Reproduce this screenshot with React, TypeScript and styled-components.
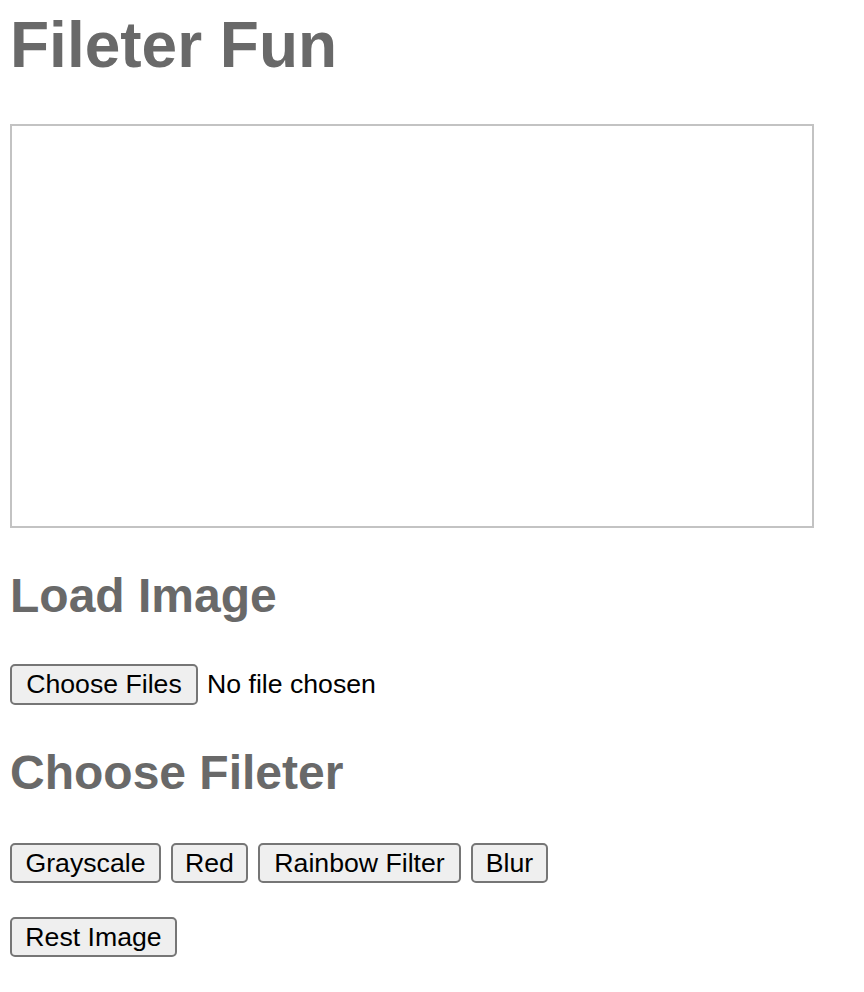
import React, { useRef, useState } from "react";
import styled, { createGlobalStyle } from "styled-components";

const GlobalStyle = createGlobalStyle`
  html, body {
    margin: 0;
    padding: 0;
    background: #ffffff;
  }
  body {
    font-family: "Liberation Sans", Arial, Helvetica, sans-serif;
  }
`;

const Page = styled.main`
  display: flex;
  flex-direction: column;
  align-items: flex-start;
  padding: 0 10px;
`;

const Title = styled.h1`
  margin: 8px 0 42px;
  font-size: 64px;
  line-height: 74px;
  font-weight: 700;
  color: #696969;
`;

const Heading = styled.h2<{ $top: number; $bottom: number }>`
  margin: ${(p) => p.$top}px 0 ${(p) => p.$bottom}px;
  font-size: 48px;
  line-height: 55px;
  font-weight: 700;
  color: #696969;
`;

const Canvas = styled.canvas`
  display: block;
  width: 800px;
  height: 400px;
  border: 2px solid #c3c3c3;
  background: #ffffff;
`;

const Row = styled.div<{ $bottom?: number }>`
  display: flex;
  align-items: center;
  gap: 10px;
  margin-bottom: ${(p) => p.$bottom ?? 0}px;
`;

const Button = styled.button<{ $h?: number; $w: number }>`
  box-sizing: border-box;
  display: inline-flex;
  align-items: center;
  justify-content: center;
  width: ${(p) => p.$w}px;
  height: ${(p) => p.$h ?? 40}px;
  padding: 0;
  border: 2px solid #767676;
  border-radius: 5px;
  background: #efefef;
  color: #000000;
  font-family: "Liberation Sans", Arial, Helvetica, sans-serif;
  font-size: 26.67px;
  line-height: 1;
  white-space: nowrap;
  cursor: pointer;
`;

const FileRow = styled.div`
  display: flex;
  align-items: center;
  gap: 9px;
  margin-bottom: 39px;
`;

const HiddenInput = styled.input`
  display: none;
`;

const FileLabel = styled.span`
  font-size: 26.67px;
  line-height: 1;
  color: #000000;
`;

export default function App() {
  const inputRef = useRef<HTMLInputElement>(null);
  const [fileText, setFileText] = useState("No file chosen");

  return (
    <>
      <GlobalStyle />
      <Page>
        <Title>Fileter Fun</Title>
        <Canvas width={800} height={400} />
        <Heading $top={40} $bottom={41}>
          Load Image
        </Heading>
        <FileRow>
          <HiddenInput
            ref={inputRef}
            type="file"
            multiple
            onChange={(e) => {
              const n = e.target.files?.length ?? 0;
              setFileText(n === 0 ? "No file chosen" : n === 1 ? e.target.files![0].name : `${n} files`);
            }}
          />
          <Button $w={188} $h={41} onClick={() => inputRef.current?.click()}>
            Choose Files
          </Button>
          <FileLabel>{fileText}</FileLabel>
        </FileRow>
        <Heading $top={1} $bottom={43}>
          Choose Fileter
        </Heading>
        <Row $bottom={34}>
          <Button $w={151}>Grayscale</Button>
          <Button $w={77}>Red</Button>
          <Button $w={203}>Rainbow Filter</Button>
          <Button $w={77}>Blur</Button>
        </Row>
        <Row>
          <Button $w={167}>Rest Image</Button>
        </Row>
      </Page>
    </>
  );
}
